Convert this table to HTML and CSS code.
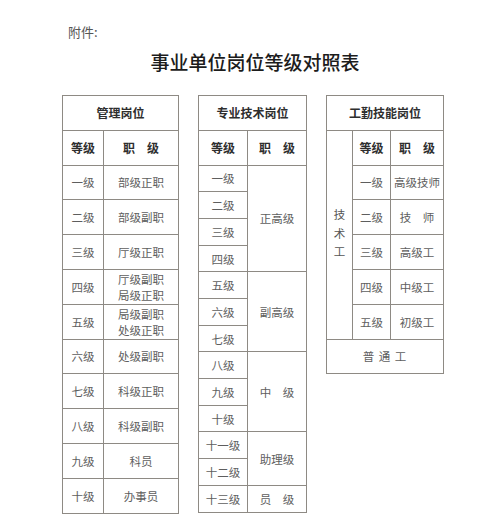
FILE: index.html
```html
<!DOCTYPE html>
<html lang="zh">
<head>
<meta charset="utf-8">
<link rel="stylesheet" href="styles.css">
</head>
<body>
<div class="page">
  <div class="annex">附件:</div>
  <h1 class="title">事业单位岗位等级对照表</h1>
  <div class="tables">
    <table class="t t1">
      <colgroup><col class="c1a"><col class="c1b"></colgroup>
      <tr class="r35"><th colspan="2" class="head">管理岗位</th></tr>
      <tr class="r35"><th>等级</th><th>职&emsp;级</th></tr>
      <tr class="r35"><td>一级</td><td>部级正职</td></tr>
      <tr class="r35"><td>二级</td><td>部级副职</td></tr>
      <tr class="r35"><td>三级</td><td>厅级正职</td></tr>
      <tr class="r35"><td>四级</td><td class="two"><div>厅级副职</div><div>局级正职</div></td></tr>
      <tr class="r35"><td>五级</td><td class="two"><div>局级副职</div><div>处级正职</div></td></tr>
      <tr class="r35"><td>六级</td><td>处级副职</td></tr>
      <tr class="r35"><td>七级</td><td>科级正职</td></tr>
      <tr class="r35"><td>八级</td><td>科级副职</td></tr>
      <tr class="r35"><td>九级</td><td>科员</td></tr>
      <tr class="r35"><td>十级</td><td>办事员</td></tr>
    </table>

    <table class="t t2">
      <colgroup><col class="c2a"><col class="c2b"></colgroup>
      <tr class="r35"><th colspan="2" class="head">专业技术岗位</th></tr>
      <tr class="r35"><th>等级</th><th>职&emsp;级</th></tr>
      <tr class="r27"><td>一级</td><td rowspan="4">正高级</td></tr>
      <tr class="r27"><td>二级</td></tr>
      <tr class="r27"><td>三级</td></tr>
      <tr class="r27"><td>四级</td></tr>
      <tr class="r27"><td>五级</td><td rowspan="3">副高级</td></tr>
      <tr class="r27"><td>六级</td></tr>
      <tr class="r27"><td>七级</td></tr>
      <tr class="r27"><td>八级</td><td rowspan="3">中&emsp;级</td></tr>
      <tr class="r27"><td>九级</td></tr>
      <tr class="r27"><td>十级</td></tr>
      <tr class="r27"><td>十一级</td><td rowspan="2">助理级</td></tr>
      <tr class="r27"><td>十二级</td></tr>
      <tr class="r27"><td>十三级</td><td>员&emsp;级</td></tr>
    </table>

    <table class="t t3">
      <colgroup><col class="c3a"><col class="c3b"><col class="c3c"></colgroup>
      <tr class="r35"><th colspan="3" class="head">工勤技能岗位</th></tr>
      <tr class="r35"><td rowspan="6" class="vert"><span>技术工</span></td><th>等级</th><th>职&emsp;级</th></tr>
      <tr class="r35"><td>一级</td><td>高级技师</td></tr>
      <tr class="r35"><td>二级</td><td>技&emsp;师</td></tr>
      <tr class="r35"><td>三级</td><td>高级工</td></tr>
      <tr class="r35"><td>四级</td><td>中级工</td></tr>
      <tr class="r35"><td>五级</td><td>初级工</td></tr>
      <tr class="r35"><td colspan="3" class="spaced">普 通 工</td></tr>
    </table>
  </div>
</div>
</body>
</html>
```

FILE: styles.css
```css
html, body {
  margin: 0;
  padding: 0;
  background: #ffffff;
}

body {
  font-family: "Noto Sans CJK SC", "Liberation Serif", serif;
  color: #555;
}

.page {
  padding: 23px 0 0 62px;
  width: 384px;
}

.annex {
  font-size: 13px;
  line-height: 18px;
  color: #555;
  margin-left: 6px;
}

.title {
  margin: 9px 0 0 0;
  font-size: 19px;
  line-height: 24px;
  font-weight: 500;
  color: #1c1c1c;
  text-align: center;
  padding-left: 2px;
}

.tables {
  display: flex;
  align-items: flex-start;
  margin-top: 21px;
}

.t {
  border-collapse: collapse;
  table-layout: fixed;
  flex: none;
}

.t th, .t td {
  border: 1px solid #8e8a84;
  padding: 0;
  text-align: center;
  vertical-align: middle;
  font-size: 11.5px;
  line-height: 14px;
  white-space: nowrap;
  overflow: hidden;
}

.t td {
  color: #5e5e5e;
}

.t th {
  font-weight: 700;
  color: #2e2e2e;
  font-size: 12px;
}

.r35 { height: 34.8px; }
.r27 { height: 26.7px; }

.t1 { width: 116px; }
.c1a { width: 41px; }
.c1b { width: 75px; }

.t2 { width: 108px; margin-left: 19px; }
.c2a { width: 49px; }
.c2b { width: 59px; }

.t3 { width: 117px; margin-left: 19px; }
.c3a { width: 26px; }
.c3b { width: 38px; }
.c3c { width: 53px; }

.two div {
  line-height: 16px;
}

.vert span {
  writing-mode: vertical-rl;
  letter-spacing: 7px;
  display: inline-block;
  color: #555;
  margin-top: 6px;
}

.spaced {
  letter-spacing: 1px;
}
```
